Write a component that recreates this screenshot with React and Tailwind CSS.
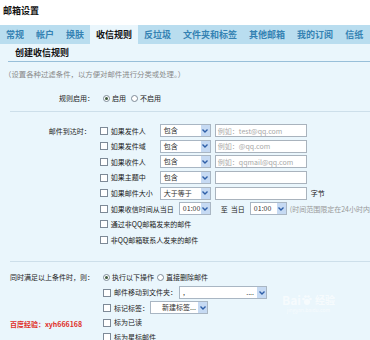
import React from "react";

const tabs = ["常规", "帐户", "换肤", "收信规则", "反垃圾", "文件夹和标签", "其他邮箱", "我的订阅", "信纸"];

function Arrow() {
  return (
    <span className="flex w-[9px] items-center justify-center bg-[#c6daf3]">
      <svg width="6" height="4" viewBox="0 0 6 4">
        <path d="M0.5 0.5 L3 3 L5.5 0.5" fill="none" stroke="#2f5fa8" strokeWidth="1.4" />
      </svg>
    </span>
  );
}

function Select({ w, children }) {
  return (
    <div className={`flex h-[13px] shrink-0 border border-[#a9b6c3] bg-white ${w}`}>
      <span className="flex-1 overflow-hidden whitespace-nowrap pl-[3px] text-[7px] leading-[11px] text-[#333]">
        {children}
      </span>
      <Arrow />
    </div>
  );
}

function Input({ placeholder }) {
  return (
    <div className="ml-[4px] flex h-[13px] w-[92px] shrink-0 items-center border border-[#a9b3bd] bg-white pl-[2px] text-[7px] text-[#a8a8a8]">
      {placeholder}
    </div>
  );
}

function Box() {
  return <span className="mr-[3px] inline-block h-[8px] w-[8px] shrink-0 border border-[#7d8a97] bg-white" />;
}

function Radio({ on }) {
  return (
    <span className="mr-[2px] flex h-[7px] w-[7px] shrink-0 items-center justify-center rounded-full border border-[#7d8a97] bg-white">
      {on && <span className="h-[3px] w-[3px] rounded-full bg-[#3d5a3d]" />}
    </span>
  );
}

function Row({ children }) {
  return <div className="flex h-[15.6px] items-center whitespace-nowrap">{children}</div>;
}

function CheckRow({ label, labelW, children }) {
  return (
    <Row>
      <Box />
      <span className={labelW}>{label}</span>
      {children}
    </Row>
  );
}

export default function App() {
  return (
    <div className="relative h-[340px] w-[370px] overflow-hidden bg-white font-['Noto_Sans_CJK_SC','Noto_Sans',sans-serif] text-[7px] text-[#222]">
      <div className="flex h-[25px] items-start pl-[3px] pt-[4px] text-[9px] font-bold text-[#111]">邮箱设置</div>

      <div className="flex h-[19px] bg-[#b9ddef]">
        {tabs.map((t) => (
          <div
            key={t}
            className={
              t === "收信规则"
                ? "flex items-center bg-[#eaf6fc] px-[6px] text-[9px] font-bold text-[#111]"
                : "flex items-center px-[6px] text-[9px] font-bold text-[#3582b3]"
            }
          >
            {t}
          </div>
        ))}
      </div>

      <div className="h-[296px] bg-[#eaf6fc]">
        <div className="ml-[8px] flex h-[18px] items-center border-b border-[#98bfd9] pl-[7px] text-[9px] font-bold text-[#111]">
          创建收信规则
        </div>

        <div className="flex h-[24px] items-center pl-[4px] text-[7.4px] text-[#888]">（设置各种过滤条件，以方便对邮件进行分类或处理。）</div>

        <div className="ml-[10px] flex h-[26px] items-center border-b border-[#cddfea]">
          <div className="w-[84px] text-right">规则启用：</div>
          <div className="ml-[9px] flex items-center">
            <Radio on />
            <span className="mr-[5px]">启用</span>
            <Radio />
            <span>不启用</span>
          </div>
        </div>

        <div className="ml-[10px] flex border-b border-[#cddfea] pb-[13px] pt-[11px]">
          <div className="flex h-[15.6px] w-[84px] items-center justify-end">邮件到达时：</div>
          <div className="ml-[9px] flex flex-col">
            <CheckRow label="如果发件人" labelW="w-[49px]">
              <Select w="w-[51px]">包含</Select>
              <Input placeholder="例如：test@qq.com" />
            </CheckRow>
            <CheckRow label="如果发件域" labelW="w-[49px]">
              <Select w="w-[51px]">包含</Select>
              <Input placeholder="例如：@qq.com" />
            </CheckRow>
            <CheckRow label="如果收件人" labelW="w-[49px]">
              <Select w="w-[51px]">包含</Select>
              <Input placeholder="例如：qqmail@qq.com" />
            </CheckRow>
            <CheckRow label="如果主题中" labelW="w-[49px]">
              <Select w="w-[51px]">包含</Select>
              <Input placeholder="" />
            </CheckRow>
            <CheckRow label="如果邮件大小" labelW="w-[49px]">
              <Select w="w-[51px]">大于等于</Select>
              <Input placeholder="" />
              <span className="ml-[4px]">字节</span>
            </CheckRow>
            <CheckRow label="如果收信时间从当日" labelW="w-[68px]">
              <Select w="w-[32px]">01:00</Select>
              <span className="ml-[10px]">至</span>
              <span className="ml-[3px] mr-[5px]">当日</span>
              <Select w="w-[37px]">01:00</Select>
              <span className="ml-[3px] text-[#999]">(时间范围限定在24小时内</span>
            </CheckRow>
            <CheckRow label="通过非QQ邮箱发来的邮件" />
            <CheckRow label="非QQ邮箱联系人发来的邮件" />
          </div>
        </div>

        <div className="ml-[10px] flex pt-[8px]">
          <div className="flex h-[15px] w-[84px] items-center justify-end whitespace-nowrap">同时满足以上条件时，则：</div>
          <div className="ml-[9px] flex flex-col">
            <div className="flex h-[15px] items-center whitespace-nowrap">
              <Radio on />
              <span className="mr-[3px]">执行以下操作</span>
              <Radio />
              <span>直接删除邮件</span>
            </div>
            <div className="flex h-[15.5px] items-center whitespace-nowrap">
              <Box />
              <span className="mr-[2px]">邮件移动到文件夹：</span>
              <Select w="w-[88px]">
                <span className="flex justify-between pr-[3px]">
                  <span>,</span>
                  <span>....</span>
                </span>
              </Select>
            </div>
            <div className="flex h-[15px] items-center whitespace-nowrap">
              <Box />
              <span className="mr-[1px]">标记标签：</span>
              <Select w="w-[58px]">
                <span className="pl-[8px]">新建标签...</span>
              </Select>
            </div>
            <div className="flex h-[14.5px] items-center whitespace-nowrap">
              <Box />
              <span>标为已读</span>
            </div>
            <div className="flex h-[15px] items-center whitespace-nowrap">
              <Box />
              <span>标为星标邮件</span>
            </div>
          </div>
        </div>
      </div>

      <div className="absolute left-[10px] top-[319px] text-[7px] font-semibold text-[#e0302a]">百度经验：xyh666168</div>

      <div className="absolute left-[282px] top-[294px] flex flex-col items-center text-white opacity-60">
        <div className="flex items-center text-[12px] font-bold leading-none">
          <span>Bai</span>
          <svg width="12" height="12" viewBox="0 0 12 12">
            <circle cx="6" cy="8" r="3" fill="#fff" />
            <circle cx="2.5" cy="5" r="1.3" fill="#fff" />
            <circle cx="4.5" cy="2.5" r="1.3" fill="#fff" />
            <circle cx="7.5" cy="2.5" r="1.3" fill="#fff" />
            <circle cx="9.5" cy="5" r="1.3" fill="#fff" />
          </svg>
          <span className="ml-[2px] text-[10px]">经验</span>
        </div>
        <div className="text-[5px] leading-[8px]">jingyan.baidu.com</div>
      </div>
    </div>
  );
}
